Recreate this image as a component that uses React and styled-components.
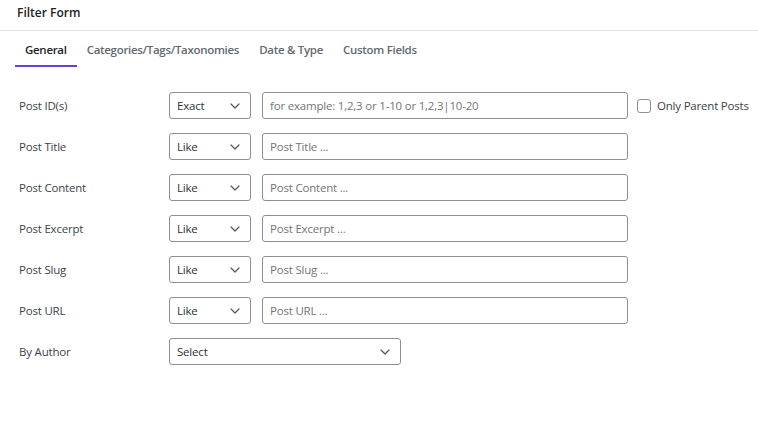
import React from 'react';
import styled, { createGlobalStyle } from 'styled-components';

const GlobalStyle = createGlobalStyle`
  body {
    margin: 0;
    background: #fff;
    font-family: "Open Sans", "Noto Sans", sans-serif;
    color: #2c3338;
  }
`;

const tabs = ['General', 'Categories/Tags/Taxonomies', 'Date & Type', 'Custom Fields'];

const rows = [
  { label: 'Post ID(s)', mode: 'Exact', placeholder: 'for example: 1,2,3 or 1-10 or 1,2,3|10-20', parent: true },
  { label: 'Post Title', mode: 'Like', placeholder: 'Post Title ...' },
  { label: 'Post Content', mode: 'Like', placeholder: 'Post Content ...' },
  { label: 'Post Excerpt', mode: 'Like', placeholder: 'Post Excerpt ...' },
  { label: 'Post Slug', mode: 'Like', placeholder: 'Post Slug ...' },
  { label: 'Post URL', mode: 'Like', placeholder: 'Post URL ...' },
];

const Chevron = () => (
  <svg width="10" height="6" viewBox="0 0 10 6" fill="none">
    <path d="M1 1l4 4 4-4" stroke="#50575e" strokeWidth="1.2" strokeLinecap="round" strokeLinejoin="round" />
  </svg>
);

const App = () => {
  return (
    <>
      <GlobalStyle />
      <Panel>
        <Header>Filter Form</Header>
        <TabBar>
          {tabs.map((tab, i) => (
            <Tab key={tab} active={i === 0}>
              {tab}
            </Tab>
          ))}
        </TabBar>
        <Form>
          {rows.map(row => (
            <Row key={row.label}>
              <Label>{row.label}</Label>
              <SelectBox width={82}>
                <span>{row.mode}</span>
                <Chevron />
              </SelectBox>
              <TextInput placeholder={row.placeholder} />
              {row.parent && (
                <CheckLabel>
                  <CheckBox />
                  Only Parent Posts
                </CheckLabel>
              )}
            </Row>
          ))}
          <Row>
            <Label>By Author</Label>
            <SelectBox width={232}>
              <span>Select</span>
              <Chevron />
            </SelectBox>
          </Row>
        </Form>
      </Panel>
    </>
  );
};

const Panel = styled.div`
  width: 758px;
  height: 429px;
  background: #fff;
`;

const Header = styled.div`
  height: 31px;
  padding: 4px 17px 0;
  line-height: 17px;
  font-size: 12px;
  font-weight: 600;
  color: #1d2327;
  border-bottom: 1px solid #e2e4e7;
  box-sizing: border-box;
`;

const TabBar = styled.div`
  display: flex;
  padding: 9px 0 0 15px;
`;

const Tab = styled.div`
  padding: 1px 10px 6px;
  line-height: 18px;
  font-size: 11.5px;
  letter-spacing: -0.3px;
  font-weight: 600;
  color: ${props => (props.active ? '#1d2327' : '#646970')};
  border-bottom: 2px solid ${props => (props.active ? '#6a3fd0' : 'transparent')};
`;

const Form = styled.div`
  display: flex;
  flex-direction: column;
  gap: 14px;
  padding: 25px 0 0 19px;
  font-size: 11.5px;
  letter-spacing: -0.2px;
`;

const Row = styled.div`
  display: flex;
  align-items: center;
  height: 27px;
`;

const Label = styled.div`
  width: 150px;
  color: #3c434a;
`;

const SelectBox = styled.div`
  width: ${props => props.width}px;
  height: 27px;
  box-sizing: border-box;
  border: 1px solid #8c8f94;
  border-radius: 3px;
  display: flex;
  align-items: center;
  justify-content: space-between;
  padding: 0 10px 0 7px;
  color: #2c3338;
`;

const TextInput = styled.input`
  width: 366px;
  height: 27px;
  box-sizing: border-box;
  margin-left: 11px;
  border: 1px solid #8c8f94;
  border-radius: 3px;
  padding: 0 7px;
  font-family: inherit;
  font-size: inherit;
  letter-spacing: inherit;
  outline: none;

  ::placeholder {
    color: #50575e;
  }
`;

const CheckLabel = styled.label`
  display: flex;
  align-items: center;
  gap: 6px;
  margin-left: 9px;
  color: #3c434a;
`;

const CheckBox = styled.span`
  width: 14px;
  height: 14px;
  box-sizing: border-box;
  border: 1px solid #8c8f94;
  border-radius: 3px;
`;

export default App;
